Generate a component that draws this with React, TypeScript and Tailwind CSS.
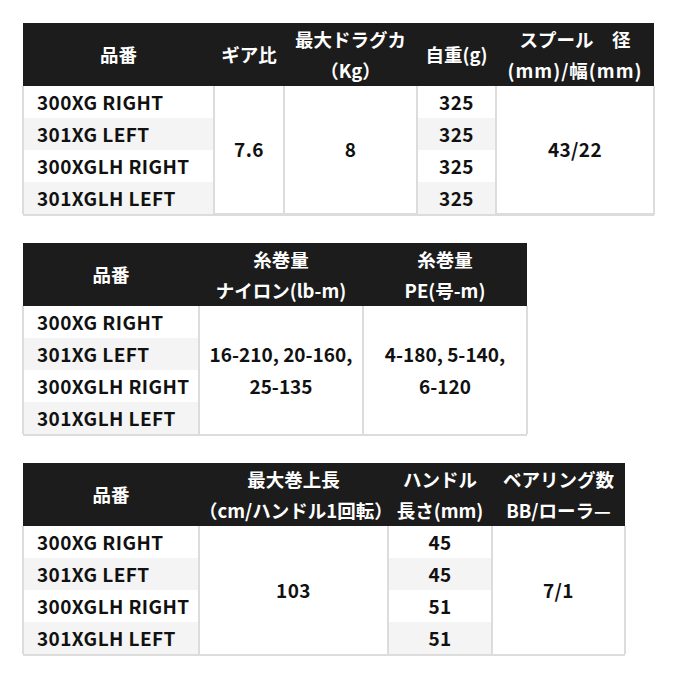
import React from "react"

const models = ["300XG RIGHT", "301XG LEFT", "300XGLH RIGHT", "301XGLH LEFT"]

const font = { fontFamily: '"Noto Sans CJK JP", "Noto Sans", sans-serif' }

function Th({ children, className = "" }: { children: React.ReactNode; className?: string }) {
  return (
    <th className={`h-[63px] p-0 text-center align-middle text-[18.5px] leading-[31px] font-bold text-white whitespace-nowrap ${className}`}>
      {children}
    </th>
  )
}

function rowBg(i: number) {
  return i % 2 === 1 ? "bg-[#f4f4f4]" : "bg-white"
}

function ModelCell({ i }: { i: number }) {
  return (
    <td className={`h-[32px] p-0 pl-[13px] text-left ${rowBg(i)} border-l-2 border-r-2 border-[#dcdcdc]`}>
      {models[i]}
    </td>
  )
}

const bodyCls = "text-[19px] tracking-[0.4px] font-bold text-[#111]"

function Table1() {
  const weights = ["325", "325", "325", "325"]
  return (
    <table className="table-fixed border-collapse w-[631px]">
      <colgroup>
        <col className="w-[191px]" />
        <col className="w-[70px]" />
        <col className="w-[133px]" />
        <col className="w-[79px]" />
        <col className="w-[158px]" />
      </colgroup>
      <thead className="bg-[#1c1c1c]">
        <tr>
          <Th>品番</Th>
          <Th>ギア比</Th>
          <Th>最大ドラグカ<br />（Kg）</Th>
          <Th>自重(g)</Th>
          <Th>スプール　径<br /><span className="tracking-[1px]">(mm)/幅(mm)</span></Th>
        </tr>
      </thead>
      <tbody className={bodyCls}>
        {models.map((_, i) => (
          <tr key={i}>
            <ModelCell i={i} />
            {i === 0 && (
              <>
                <td rowSpan={4} className="p-0 text-center bg-white border-r-2 border-b-2 border-[#dcdcdc]">7.6</td>
                <td rowSpan={4} className="p-0 text-center bg-white border-r-2 border-b-2 border-[#dcdcdc]">8</td>
              </>
            )}
            <td className={`h-[32px] p-0 text-center ${rowBg(i)} border-r-2 border-[#dcdcdc]`}>{weights[i]}</td>
            {i === 0 && (
              <td rowSpan={4} className="p-0 text-center bg-white border-r-2 border-b-2 border-[#dcdcdc]">43/22</td>
            )}
          </tr>
        ))}
        <tr>
          <td colSpan={5} className="p-0 h-[2px] bg-[#dcdcdc]" />
        </tr>
      </tbody>
    </table>
  )
}

function Table2() {
  return (
    <table className="table-fixed border-collapse w-[504px]">
      <colgroup>
        <col className="w-[176px]" />
        <col className="w-[164px]" />
        <col className="w-[164px]" />
      </colgroup>
      <thead className="bg-[#1c1c1c]">
        <tr>
          <Th>品番</Th>
          <Th>糸巻量<br />ナイロン(lb-m)</Th>
          <Th>糸巻量<br />PE(号-m)</Th>
        </tr>
      </thead>
      <tbody className={bodyCls}>
        {models.map((_, i) => (
          <tr key={i}>
            <ModelCell i={i} />
            {i === 0 && (
              <>
                <td rowSpan={4} className="p-0 text-center leading-[32px] tracking-normal bg-white border-r-2 border-[#dcdcdc]">
                  16-210, 20-160,<br />25-135
                </td>
                <td rowSpan={4} className="p-0 text-center leading-[32px] tracking-normal bg-white border-r-2 border-[#dcdcdc]">
                  4-180, 5-140,<br />6-120
                </td>
              </>
            )}
          </tr>
        ))}
        <tr>
          <td colSpan={3} className="p-0 h-[2px] bg-[#dcdcdc]" />
        </tr>
      </tbody>
    </table>
  )
}

function Table3() {
  const handles = ["45", "45", "51", "51"]
  return (
    <table className="table-fixed border-collapse w-[602px]">
      <colgroup>
        <col className="w-[176px]" />
        <col className="w-[189px]" />
        <col className="w-[104px]" />
        <col className="w-[133px]" />
      </colgroup>
      <thead className="bg-[#1c1c1c]">
        <tr>
          <Th>品番</Th>
          <Th>最大巻上長<br />（cm/ハンドル1回転）</Th>
          <Th>ハンドル<br />長さ(mm)</Th>
          <Th>ベアリング数<br />BB/ローラ—</Th>
        </tr>
      </thead>
      <tbody className={bodyCls}>
        {models.map((_, i) => (
          <tr key={i}>
            <ModelCell i={i} />
            {i === 0 && (
              <td rowSpan={4} className="p-0 text-center bg-white border-r-2 border-[#dcdcdc]">103</td>
            )}
            <td className={`h-[32px] p-0 text-center ${rowBg(i)} border-r-2 border-[#dcdcdc]`}>{handles[i]}</td>
            {i === 0 && (
              <td rowSpan={4} className="p-0 text-center bg-white border-r-2 border-[#dcdcdc]">7/1</td>
            )}
          </tr>
        ))}
        <tr>
          <td colSpan={4} className="p-0 h-[2px] bg-[#dcdcdc]" />
        </tr>
      </tbody>
    </table>
  )
}

export default function App() {
  return (
    <div className="w-[680px] h-[680px] bg-white pl-[22px] pt-[23px]" style={font}>
      <Table1 />
      <div className="mt-[27px]">
        <Table2 />
      </div>
      <div className="mt-[27px]">
        <Table3 />
      </div>
    </div>
  )
}
